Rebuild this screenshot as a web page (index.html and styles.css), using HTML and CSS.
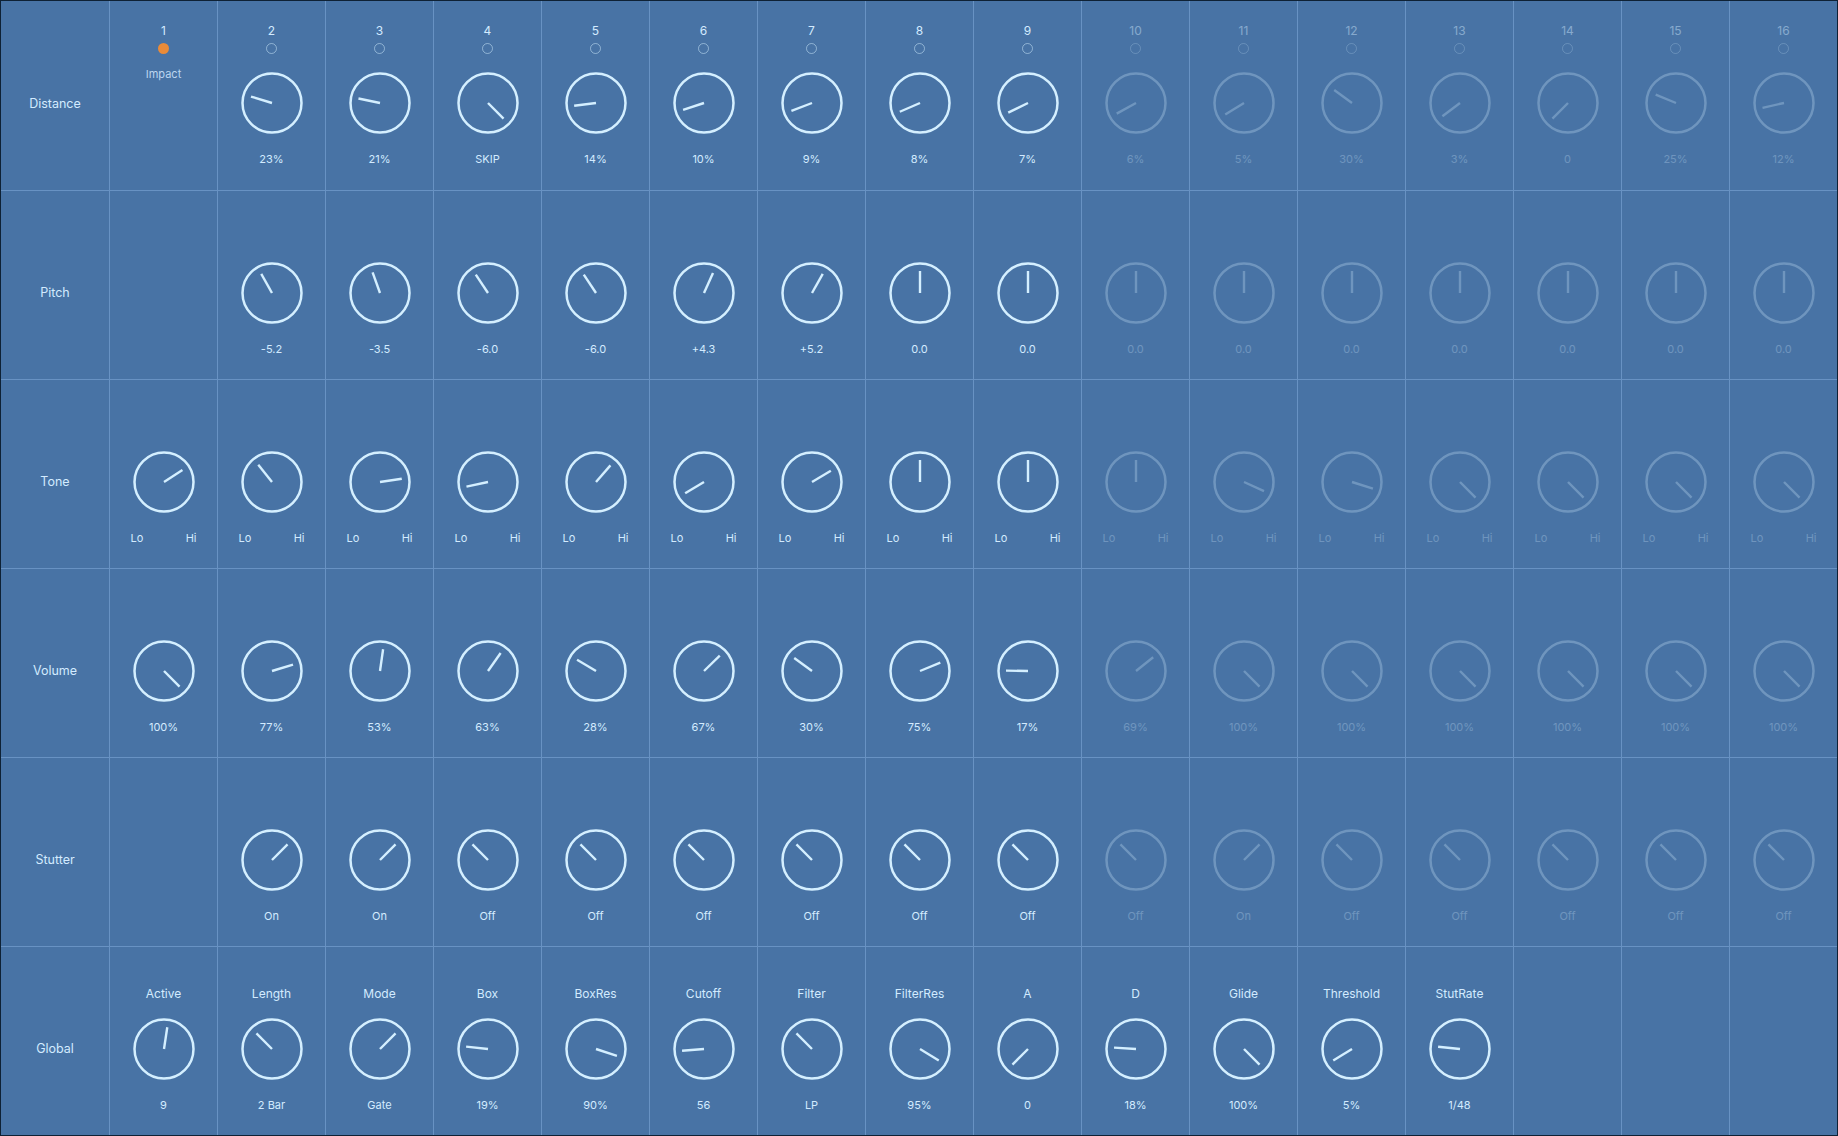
FILE: index.html
```html
<!DOCTYPE html>
<html lang="en">
<head>
  <meta charset="UTF-8">
  <title>Drum Sequencer - Step Params</title>
  <link rel="stylesheet" href="styles.css">
</head>
<body>
  <div class="grid" id="grid"></div>

  <script>
    const STEPS = 16;
    const ACTIVE = 9;
    const pct = p => -135 + p * 2.7;

    function knob(angle) {
      return `<svg class="knob" width="64" height="64" viewBox="0 0 64 64">
        <circle cx="32" cy="32" r="29.5"/>
        <line x1="32" y1="32" x2="32" y2="10" transform="rotate(${angle} 32 32)"/>
      </svg>`;
    }

    const distance = [null, [pct(23), '23%'], [pct(21), '21%'], [135, 'SKIP'], [pct(14), '14%'],
      [pct(10), '10%'], [pct(9), '9%'], [pct(8), '8%'], [pct(7), '7%'], [pct(6), '6%'], [pct(5), '5%'],
      [pct(30), '30%'], [pct(3), '3%'], [-135, '0'], [pct(25), '25%'], [pct(12), '12%']];

    const pitch = [null, -5.2, -3.5, -6.0, -6.0, 4.3, 5.2, 0, 0, 0, 0, 0, 0, 0, 0, 0]
      .map(v => v === null ? null : [v * 5.625, v > 0 ? '+' + v.toFixed(1) : v.toFixed(1)]);

    const tone = [57, -38.6, 81.5, -102, 41, -121, 59, 0, 0, 0, 114.5, 107.8, 135, 135, 135, 135]
      .map(a => [a, 'lohi']);

    const volume = [100, 77, 53, 63, 28, 67, 30, 75, 17, 69, 100, 100, 100, 100, 100, 100]
      .map(p => [pct(p), p + '%']);

    const stutter = [null, 1, 1, 0, 0, 0, 0, 0, 0, 0, 1, 0, 0, 0, 0, 0]
      .map(v => v === null ? null : (v ? [45, 'On'] : [-45, 'Off']));

    const global = [
      ['Active', 8.6, '9'], ['Length', -45, '2 Bar'], ['Mode', 45, 'Gate'], ['Box', pct(19), '19%'],
      ['BoxRes', pct(90), '90%'], ['Cutoff', -94.5, '56'], ['Filter', -45, 'LP'], ['FilterRes', pct(95), '95%'],
      ['A', -135, '0'], ['D', pct(18), '18%'], ['Glide', 135, '100%'], ['Threshold', -121.5, '5%'],
      ['StutRate', -84, '1/48']
    ];

    const rows = [
      { name: 'Distance', cells: distance },
      { name: 'Pitch', cells: pitch },
      { name: 'Tone', cells: tone },
      { name: 'Volume', cells: volume },
      { name: 'Stutter', cells: stutter }
    ];

    function valueHtml(text) {
      if (text === 'lohi') return '<div class="lohi"><span>Lo</span><span>Hi</span></div>';
      return `<div class="value">${text}</div>`;
    }

    let html = '';

    rows.forEach((row, r) => {
      const top = r === 0 ? ' top' : '';
      html += `<div class="cell label${top}">${row.name}</div>`;

      row.cells.forEach((c, i) => {
        const dim = i >= ACTIVE ? ' dim' : '';
        let inner = '';

        if (r === 0) {
          inner += `<div class="head${dim}">
            <div class="num">${i + 1}</div>
            <div class="dot${i === 0 ? ' on' : ''}"></div>
          </div>`;
          if (i === 0) inner += '<div class="name">Impact</div>';
        }

        if (c) {
          inner += `<div class="ctrl${dim}">${knob(c[0])}${valueHtml(c[1])}</div>`;
        }

        html += `<div class="cell${top}${r === 0 ? '' : ' plain'}">${inner}</div>`;
      });
    });

    html += '<div class="cell label">Global</div>';
    for (let i = 0; i < STEPS; i++) {
      const g = global[i];
      if (!g) { html += '<div class="cell"></div>'; continue; }
      html += `<div class="cell global">
        <div class="param">${g[0]}</div>
        <div class="ctrl">${knob(g[1])}${valueHtml(g[2])}</div>
      </div>`;
    }

    document.getElementById('grid').innerHTML = html;
  </script>
</body>
</html>
```

FILE: styles.css
```css
body {
  margin: 0;
  background: #0e2135;
  font-family: 'Inter', 'Noto Sans', sans-serif;
  color: #d3ebff;
}

.grid {
  display: grid;
  grid-template-columns: repeat(17, 108px);
  grid-template-rows: repeat(6, 189px);
  border: 1px solid #0e2135;
  background: #4873a5;
  width: 1836px;
}

.cell {
  box-sizing: border-box;
  border-left: 1px solid #6892c3;
  border-top: 1px solid #6892c3;
  display: flex;
  flex-direction: column;
  align-items: center;
}

.cell.top {
  border-top: none;
  padding-top: 22px;
}

.cell.plain {
  padding-top: 70px;
}

.cell.label {
  border-left: none;
  padding-top: 94px;
  font-size: 12.5px;
  line-height: 16px;
}

.cell.label.top {
  padding-top: 95px;
}

.cell.global {
  padding-top: 39px;
}

.head {
  display: flex;
  flex-direction: column;
  align-items: center;
}

.head.dim {
  opacity: 0.45;
}

.num {
  font-size: 12px;
  line-height: 16px;
}

.dot {
  width: 11px;
  height: 11px;
  margin-top: 4px;
  box-sizing: border-box;
  border-radius: 50%;
  border: 1.3px solid rgba(212, 239, 255, 0.5);
}

.dot.on {
  background: #e98b39;
  border: none;
}

.name {
  margin-top: 13px;
  font-size: 11px;
  line-height: 14px;
  color: #bcd6f0;
}

.ctrl {
  display: flex;
  flex-direction: column;
  align-items: center;
}

.top .ctrl {
  margin-top: 17px;
}

.global .ctrl {
  margin-top: 15px;
}

.ctrl.dim {
  opacity: 0.28;
}

.param {
  font-size: 12px;
  line-height: 16px;
}

.knob {
  display: block;
}

.knob circle {
  fill: none;
  stroke: #d4efff;
  stroke-width: 2.5;
}

.knob line {
  stroke: #d4efff;
  stroke-width: 2.4;
}

.value {
  margin-top: 17px;
  font-size: 11px;
  line-height: 14px;
}

.lohi {
  margin-top: 17px;
  width: 66px;
  display: flex;
  justify-content: space-between;
  font-size: 11px;
  line-height: 14px;
}
```
